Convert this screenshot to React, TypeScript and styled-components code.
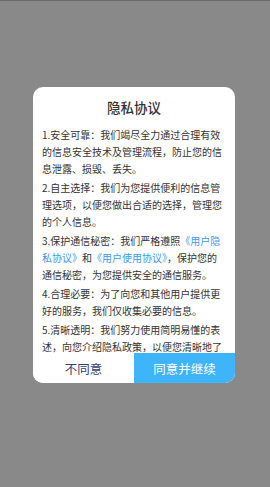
import styled, { createGlobalStyle } from 'styled-components';

const GlobalStyle = createGlobalStyle`
  html, body {
    margin: 0;
    padding: 0;
  }
  body {
    font-family: "Noto Sans CJK SC", "Noto Sans", sans-serif;
    background: #898989;
  }
`;

const Page = styled.div`
  width: 270px;
  height: 487px;
  box-sizing: border-box;
  padding: 86px 0 0 33px;
  background: #898989;
  border-top: 1px solid #6a6a6a;
  overflow: hidden;
`;

const Dialog = styled.div`
  width: 202px;
  height: 296px;
  background: #ffffff;
  border-radius: 10px;
  display: flex;
  flex-direction: column;
  overflow: hidden;
`;

const Title = styled.h2`
  margin: 0;
  padding-top: 10px;
  height: 20px;
  line-height: 20px;
  text-align: center;
  font-size: 13.5px;
  font-weight: 500;
  color: #333333;
`;

const Content = styled.div`
  flex: 1;
  overflow: hidden;
  padding: 9px 11px 0 9px;
  font-size: 10px;
  line-height: 17px;
  color: #333333;
`;

const Para = styled.p`
  margin: 0 0 2px;
`;

const Link = styled.span`
  color: #3d98ec;
`;

const Actions = styled.div`
  display: flex;
  height: 30px;
  flex-shrink: 0;
`;

const ActionButton = styled.button<{ $primary?: boolean }>`
  flex: 1;
  border: none;
  margin: 0;
  padding: 0;
  font-family: inherit;
  font-size: 12.5px;
  background: ${(p) => (p.$primary ? '#3eb4fb' : '#ffffff')};
  color: ${(p) => (p.$primary ? '#ffffff' : '#34406e')};
`;

const App = () => (
  <>
    <GlobalStyle />
    <Page>
      <Dialog>
        <Title>隐私协议</Title>
        <Content>
          <Para>1.安全可靠：我们竭尽全力通过合理有效的信息安全技术及管理流程，防止您的信息泄露、损毁、丢失。</Para>
          <Para>2.自主选择：我们为您提供便利的信息管理选项，以便您做出合适的选择，管理您的个人信息。</Para>
          <Para>
            3.保护通信秘密：我们严格遵照<Link>《用户隐私协议》</Link>和<Link>《用户使用协议》</Link>，保护您的通信秘密，为您提供安全的通信服务。
          </Para>
          <Para>4.合理必要：为了向您和其他用户提供更好的服务，我们仅收集必要的信息。</Para>
          <Para>5.清晰透明：我们努力使用简明易懂的表述，向您介绍隐私政策，以便您清晰地了解我们的信息收集规则。</Para>
        </Content>
        <Actions>
          <ActionButton>不同意</ActionButton>
          <ActionButton $primary>同意并继续</ActionButton>
        </Actions>
      </Dialog>
    </Page>
  </>
);

export default App;
